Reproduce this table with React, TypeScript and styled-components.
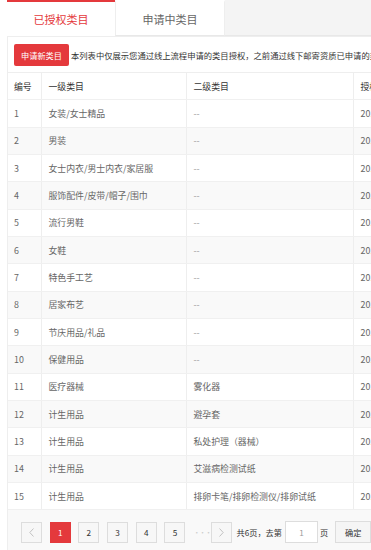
import React from 'react';
import styled, { createGlobalStyle } from 'styled-components';

const red = '#e4393c';

const GlobalStyle = createGlobalStyle`
  html, body {
    margin: 0;
    padding: 0;
    background: #fff;
    overflow: hidden;
  }
  body {
    font-family: "Microsoft YaHei", "Noto Sans CJK SC", "Noto Sans", sans-serif;
    color: #333;
  }
`;

const Page = styled.div`
  width: 100%;
  height: 550px;
  overflow: hidden;
`;

const TabBar = styled.div`
  display: flex;
  height: 36px;
  margin-left: 7px;
`;

const Tab = styled.div<{ $active?: boolean }>`
  width: ${p => (p.$active ? '108px' : '110px')};
  box-sizing: border-box;
  display: flex;
  align-items: center;
  justify-content: center;
  font-size: 11px;
  background: #fff;
  color: ${p => (p.$active ? red : '#666')};
  border-top: 2px solid ${p => (p.$active ? red : '#fff')};
  border-left: ${p => (p.$active ? 'none' : '1px solid #eee')};
  border-right: ${p => (p.$active ? 'none' : '1px solid #eee')};
  border-bottom: ${p => (p.$active ? 'none' : '1px solid #e8e8e8')};
  flex-shrink: 0;
`;

const TabFiller = styled.div`
  flex: 1;
  background: #f4f4f4;
  border-bottom: 1px solid #e8e8e8;
`;

const Panel = styled.div`
  margin-left: 7px;
  border-left: 1px solid #eee;
  border-top: 1px solid #eee;
  background: #f9f9f9;
  height: 513px;
`;

const Toolbar = styled.div`
  display: flex;
  align-items: center;
  gap: 2px;
  padding: 7px 0 0 6px;
  background: #fff;
  height: 29px;
  box-sizing: border-box;
  white-space: nowrap;
`;

const RedButton = styled.button`
  height: 22px;
  width: 55px;
  padding: 0;
  border: none;
  border-radius: 2px;
  background: ${red};
  color: #fff;
  font-family: inherit;
  font-size: 8.2px;
  flex-shrink: 0;
`;

const Notice = styled.span`
  font-size: 8.3px;
  color: #333;
`;

const TableWrap = styled.div`
  padding-top: 6px;
  background: #fff;
`;

const Table = styled.table`
  border-collapse: collapse;
  table-layout: fixed;
  width: 560px;
  font-size: 8.9px;
`;

const Row = styled.tr<{ $striped?: boolean }>`
  height: 27.33px;
  background: ${p => (p.$striped ? '#f9f9f9' : '#fff')};
`;

const HeadCell = styled.th<{ $w: number }>`
  box-sizing: border-box;
  width: ${p => p.$w}px;
  text-align: left;
  font-weight: normal;
  color: #333;
  padding: 0 0 0 7px;
  border-top: 1px solid #eee;
  border-bottom: 1px solid #f0f0f0;
  border-left: 1px solid #eee;
  white-space: nowrap;
  &:first-child {
    border-left: none;
    padding-left: 6px;
  }
`;

const Cell = styled.td<{ $muted?: boolean }>`
  box-sizing: border-box;
  color: ${p => (p.$muted ? '#999' : '#666')};
  padding: 0 0 0 7px;
  border-bottom: 1px solid #f0f0f0;
  border-left: 1px solid #eee;
  white-space: nowrap;
  overflow: hidden;
  &:first-child {
    border-left: none;
    padding-left: 6px;
  }
`;

const Pager = styled.div`
  display: flex;
  align-items: center;
  padding: 11px 0 0 13px;
  white-space: nowrap;
`;

const PageBtn = styled.div<{ $active?: boolean; $arrow?: boolean }>`
  width: 21px;
  height: 21px;
  box-sizing: border-box;
  margin-right: 7.7px;
  display: flex;
  align-items: center;
  justify-content: center;
  font-size: 8.2px;
  color: ${p => (p.$active ? '#fff' : p.$arrow ? '#bbb' : '#333')};
  background: ${p => (p.$active ? red : '#f7f7f7')};
  border: 1px solid ${p => (p.$active ? red : '#ddd')};
  flex-shrink: 0;
`;

const Dots = styled.span`
  width: 10px;
  margin-right: 7.7px;
  color: #ccc;
  font-size: 7px;
  letter-spacing: -1px;
`;

const PagerText = styled.span<{ $tight?: boolean }>`
  font-size: 8.2px;
  color: #333;
  margin: ${p => (p.$tight ? '0 0 0 2px' : '0 3px 0 -3px')};
`;

const PageInput = styled.div`
  width: 33px;
  height: 21.5px;
  box-sizing: border-box;
  border: 1px solid #ddd;
  background: #fff;
  display: flex;
  align-items: center;
  justify-content: center;
  font-size: 8.2px;
  color: #999;
  flex-shrink: 0;
`;

const Confirm = styled.div`
  margin-left: 7px;
  width: 36px;
  height: 21.5px;
  box-sizing: border-box;
  border: 1px solid #ddd;
  background: #f5f5f5;
  display: flex;
  align-items: center;
  justify-content: center;
  font-size: 8.2px;
  color: #333;
  flex-shrink: 0;
`;

const Chevron = ({ dir }: { dir: 'left' | 'right' }) => (
  <svg width="5" height="9" viewBox="0 0 5 9">
    <path
      d={dir === 'left' ? 'M4.5 0.5 L0.8 4.5 L4.5 8.5' : 'M0.5 0.5 L4.2 4.5 L0.5 8.5'}
      fill="none"
      stroke="#bbb"
      strokeWidth="0.9"
    />
  </svg>
);

const rows: [string, string][] = [
  ['女装/女士精品', '--'],
  ['男装', '--'],
  ['女士内衣/男士内衣/家居服', '--'],
  ['服饰配件/皮带/帽子/围巾', '--'],
  ['流行男鞋', '--'],
  ['女鞋', '--'],
  ['特色手工艺', '--'],
  ['居家布艺', '--'],
  ['节庆用品/礼品', '--'],
  ['保健用品', '--'],
  ['医疗器械', '雾化器'],
  ['计生用品', '避孕套'],
  ['计生用品', '私处护理（器械）'],
  ['计生用品', '艾滋病检测试纸'],
  ['计生用品', '排卵卡笔/排卵检测仪/排卵试纸'],
];

const App: React.FC = () => {
  return (
    <Page>
      <GlobalStyle />
      <TabBar>
        <Tab $active>已授权类目</Tab>
        <Tab>申请中类目</Tab>
        <TabFiller />
      </TabBar>
      <Panel>
        <Toolbar>
          <RedButton>申请新类目</RedButton>
          <Notice>
            本列表中仅展示您通过线上流程申请的类目授权，之前通过线下邮寄资质已申请的类目请联系对接人员查询
          </Notice>
        </Toolbar>
        <TableWrap>
          <Table>
            <thead>
              <Row>
                <HeadCell $w={33}>编号</HeadCell>
                <HeadCell $w={145}>一级类目</HeadCell>
                <HeadCell $w={167}>二级类目</HeadCell>
                <HeadCell $w={215}>授权时间</HeadCell>
              </Row>
            </thead>
            <tbody>
              {rows.map(([first, second], i) => (
                <Row key={i} $striped={i % 2 === 1}>
                  <Cell>{i + 1}</Cell>
                  <Cell>{first}</Cell>
                  <Cell $muted={second === '--'}>{second}</Cell>
                  <Cell>2019-03-18 10:26:43</Cell>
                </Row>
              ))}
            </tbody>
          </Table>
        </TableWrap>
        <Pager>
          <PageBtn $arrow>
            <Chevron dir="left" />
          </PageBtn>
          <PageBtn $active>1</PageBtn>
          <PageBtn>2</PageBtn>
          <PageBtn>3</PageBtn>
          <PageBtn>4</PageBtn>
          <PageBtn>5</PageBtn>
          <Dots>···</Dots>
          <PageBtn $arrow>
            <Chevron dir="right" />
          </PageBtn>
          <PagerText>共6页，去第</PagerText>
          <PageInput>1</PageInput>
          <PagerText $tight>页</PagerText>
          <Confirm>确定</Confirm>
        </Pager>
      </Panel>
    </Page>
  );
};

export default App;
